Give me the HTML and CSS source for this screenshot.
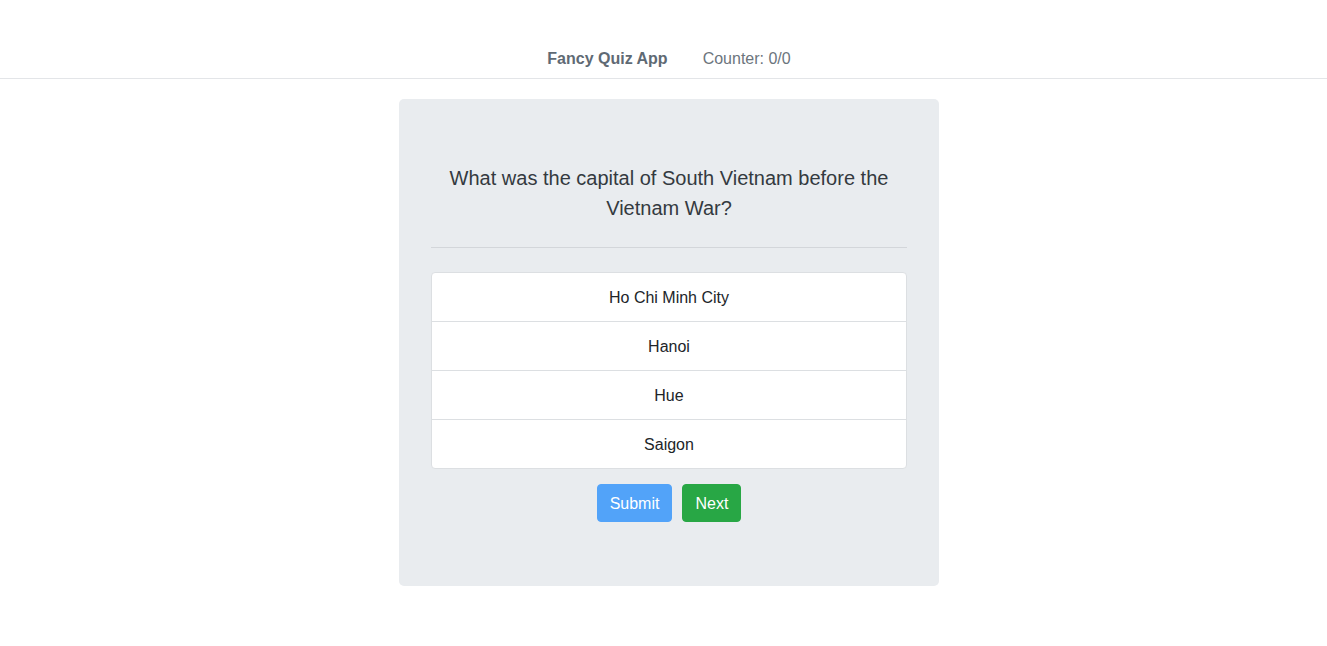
FILE: index.html
```html
<!DOCTYPE html>
<html lang="en">
<head>
<meta charset="utf-8">
<title>Fancy Quiz App</title>
<link rel="stylesheet" href="styles.css">
</head>
<body>
<nav class="navbar">
  <span class="brand">Fancy Quiz App</span>
  <span class="counter">Counter: 0/0</span>
</nav>
<main class="main">
  <section class="jumbotron">
    <p class="question">What was the capital of South Vietnam before the Vietnam War?</p>
    <hr class="divider">
    <ul class="list-group">
      <li class="list-item">Ho Chi Minh City</li>
      <li class="list-item">Hanoi</li>
      <li class="list-item">Hue</li>
      <li class="list-item">Saigon</li>
    </ul>
    <div class="actions">
      <button class="btn btn-primary" disabled>Submit</button>
      <button class="btn btn-success">Next</button>
    </div>
  </section>
</main>
</body>
</html>
```
FILE: styles.css
```css
* { box-sizing: border-box; }
html, body { margin: 0; padding: 0; }
body {
  font-family: "Liberation Sans", Arial, sans-serif;
  font-size: 16px;
  line-height: 1.5;
  color: #212529;
  background: #fff;
}
.navbar {
  display: flex;
  justify-content: center;
  align-items: center;
  gap: 35px;
  padding: 47px 0 7px 11px;
  border-bottom: 1px solid #e3e5e8;
}
.brand {
  font-weight: bold;
  color: #5f6a74;
}
.counter {
  color: #6c757d;
}
.main {
  display: flex;
  justify-content: center;
  padding: 20px 0 0 11px;
}
.jumbotron {
  width: 540px;
  background: #e9ecef;
  border-radius: 5px;
  padding: 64px 32px;
}
.question {
  margin: 0;
  font-size: 20px;
  line-height: 30px;
  text-align: center;
  color: #343a40;
}
.divider {
  margin: 24px 0;
  border: 0;
  border-top: 1px solid #d3d6da;
  height: 0;
}
.list-group {
  list-style: none;
  margin: 0;
  padding: 0;
  background: #fff;
  border-radius: 4px;
  border: 1px solid #dcdfe2;
}
.list-item {
  padding: 13px 20px 11px;
  text-align: center;
  border-top: 1px solid #dcdfe2;
  line-height: 24px;
}
.list-item:first-child { border-top: 0; }
.actions {
  display: flex;
  justify-content: center;
  gap: 10px;
  margin-top: 15px;
}
.btn {
  font-family: inherit;
  font-size: 16px;
  line-height: 24px;
  padding: 7px 12px 5px;
  border: 1px solid transparent;
  border-radius: 4px;
  color: #fff;
}
.btn-primary { background: #52a3f9; border-color: #52a3f9; }
.btn-success { background: #28a745; border-color: #28a745; }
```
